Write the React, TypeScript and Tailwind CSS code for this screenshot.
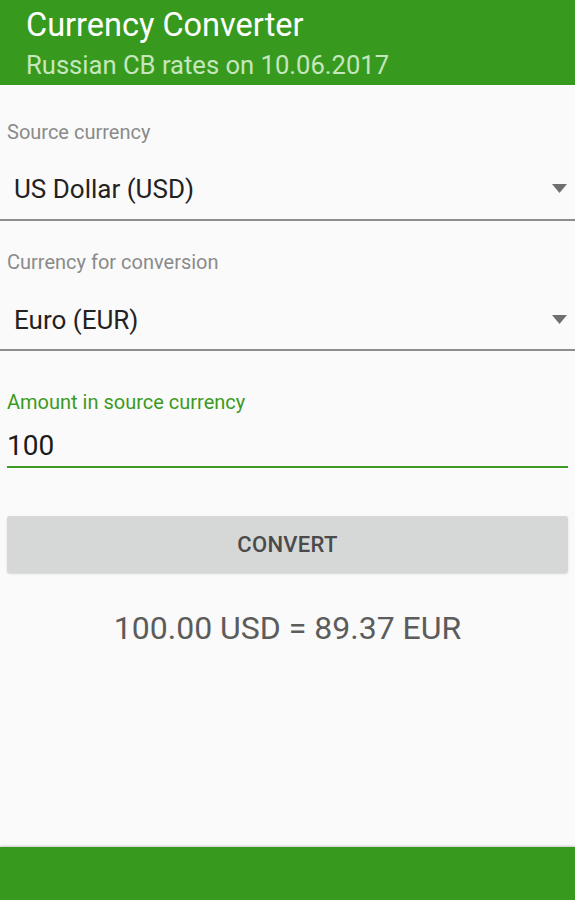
import React from "react";

function Caret() {
  return (
    <svg width="15" height="10" viewBox="0 0 15 10" className="shrink-0">
      <polygon points="0,0 15,0 7.5,9" fill="#6f6f6f" />
    </svg>
  );
}

export default function App() {
  return (
    <div
      className="w-[575px] h-[900px] flex flex-col bg-[#fafafa] overflow-hidden"
      style={{ fontFamily: "Roboto, 'Noto Sans', sans-serif" }}
    >
      <header className="h-[85px] bg-[#379a1f] px-[26px] pt-[7px] shrink-0">
        <div className="text-[32.5px] leading-[36px] text-white">Currency Converter</div>
        <div className="text-[25.6px] leading-[30px] text-[#c6e6bd] mt-[7px]">
          Russian CB rates on 10.06.2017
        </div>
      </header>

      <main className="flex-1 flex flex-col">
        <div className="pt-[35px]">
          <div className="px-[7px] text-[20px] leading-[24px] text-[#8a8a8a]">Source currency</div>
          <div className="flex items-center justify-between pl-[14px] pr-[8px] pt-[30px] pb-[15px]">
            <span className="text-[26px] leading-[30px] text-[#222]">US Dollar (USD)</span>
            <Caret />
          </div>
          <div className="h-[2px] bg-[#8c8c8c]" />
        </div>

        <div className="pt-[29px]">
          <div className="px-[7px] text-[20px] leading-[24px] text-[#8a8a8a]">Currency for conversion</div>
          <div className="flex items-center justify-between pl-[14px] pr-[8px] pt-[31px] pb-[14px]">
            <span className="text-[26px] leading-[30px] text-[#222]">Euro (EUR)</span>
            <Caret />
          </div>
          <div className="h-[2px] bg-[#8c8c8c]" />
        </div>

        <div className="pt-[39px] px-[7px]">
          <div className="text-[20px] leading-[24px] text-[#3a9a22]">Amount in source currency</div>
          <div className="text-[28px] leading-[32px] text-[#1a1a1a] pt-[16px] pb-[4px]">100</div>
          <div className="h-[2px] bg-[#3a9a22]" />
        </div>

        <div className="px-[7px] pt-[48px]">
          <button className="w-full h-[57px] rounded-[3px] bg-[#d6d7d7] shadow-[0_1px_2px_rgba(0,0,0,0.15)] text-[22px] font-medium text-[#4a4a4a] tracking-[0.3px]">
            CONVERT
          </button>
        </div>

        <div className="pt-[36px] text-center text-[32px] leading-[38px] text-[#5c5c5c]">
          100.00 USD = 89.37 EUR
        </div>
      </main>

      <footer className="h-[53px] bg-[#379a1f] shrink-0 shadow-[0_-1px_2px_rgba(0,0,0,0.2)]" />
    </div>
  );
}
